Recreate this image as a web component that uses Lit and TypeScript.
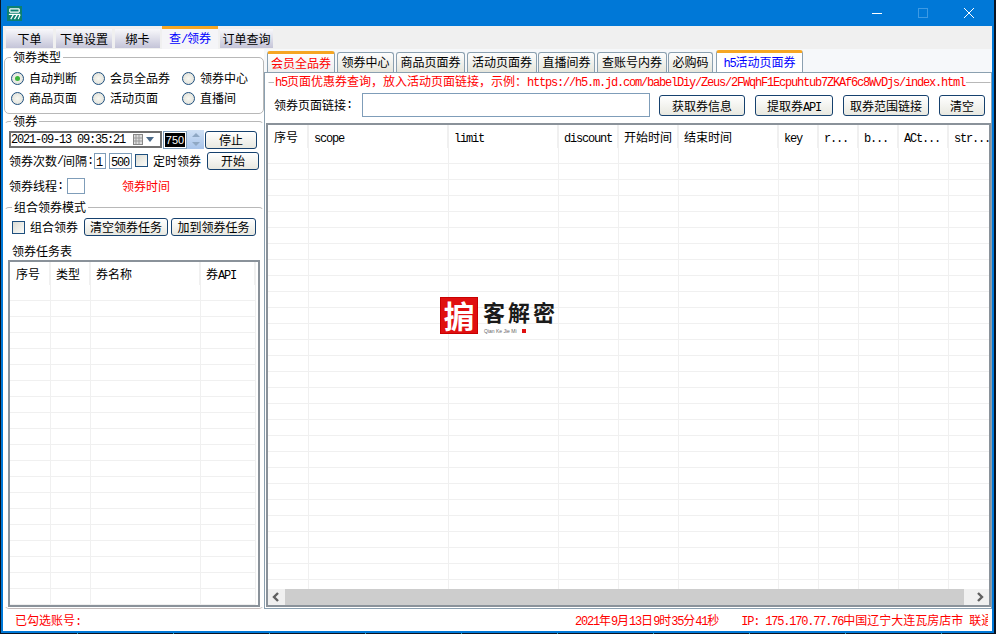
import { LitElement, html, css } from "lit";
import { customElement } from "lit/decorators.js";

const leftCols = [{ t: "序号", w: 41 }, { t: "类型", w: 40 }, { t: "券名称", w: 110 }, { t: "券API", w: 55 }];
const rightCols = [
  { t: "序号", w: 41 }, { t: "scope", w: 140 }, { t: "limit", w: 110 }, { t: "discount", w: 60 },
  { t: "开始时间", w: 60 }, { t: "结束时间", w: 100 }, { t: "key", w: 40 }, { t: "r...", w: 40 },
  { t: "b...", w: 40 }, { t: "ACt...", w: 50 }, { t: "str...", w: 42 },
];
const menuTabs = [
  { t: "下单", w: 47, gap: 3 }, { t: "下单设置", w: 56, gap: 3 }, { t: "绑卡", w: 45, gap: 2 },
  { t: "查/领券", w: 56, gap: 2, on: true }, { t: "订单查询", w: 53, gap: 0 },
];
const couponTabs = [
  { t: "会员全品券", w: 68, gap: 2, cls: "sel" }, { t: "领券中心", w: 57, gap: 2, cls: "" },
  { t: "商品页面券", w: 69, gap: 2, cls: "" }, { t: "活动页面券", w: 70, gap: 1, cls: "" },
  { t: "直播间券", w: 57, gap: 2, cls: "" }, { t: "查账号内券", w: 70, gap: 1, cls: "" },
  { t: "必购码", w: 45, gap: 3, cls: "" }, { t: "h5活动页面券", w: 87, gap: 0, cls: "on" },
];
const radios = [
  { t: "自动判断", on: true }, { t: "会员全品券" }, { t: "领券中心" },
  { t: "商品页面" }, { t: "活动页面" }, { t: "直播间" },
];

// latin runs are squeezed so they take half of a CJK cell, like the bitmap font
const mix = (s: string) =>
  s.split(/([\x20-\x7e]+)/).map((p, i) => (i % 2 ? html`<span class="m">${p}</span>` : p));

const latin = css`
  .m { font-family: "Liberation Mono", monospace; font-size: 12px; letter-spacing: -1.2px; white-space: pre; }
`;

@customElement("data-grid")
class DataGrid extends LitElement {
  static properties = { cols: { type: Array }, rows: { type: Number } };
  cols: { t: string; w: number }[] = [];
  rows = 0;

  static styles = [
    latin,
    css`
      :host { display: block; overflow: hidden; height: 100%; font-size: 12px; color: #000; }
      .row { display: flex; height: 16px; }
      .head { height: 23px; }
      .cell { box-sizing: border-box; flex: none; border-right: 1px solid #f0f0f0; border-bottom: 1px solid #f0f0f0; }
      .head .cell { border-bottom: none; border-right-width: 2px; padding: 5px 0 0 5px; line-height: 14px; white-space: nowrap; overflow: hidden; }
      .head .cell:first-child { padding-left: 6px; }
    `,
  ];

  render() {
    return html`
      <div class="row head">
        ${this.cols.map((c) => html`<div class="cell" style="width:${c.w}px">${mix(c.t)}</div>`)}
      </div>
      ${Array.from({ length: this.rows }).map(
        () => html`<div class="row">${this.cols.map((c) => html`<div class="cell" style="width:${c.w}px"></div>`)}</div>`
      )}
    `;
  }
}

@customElement("app-root")
export class AppRoot extends LitElement {
  static styles = [
    latin,
    css`
      :host {
        display: block; width: 996px; height: 634px; overflow: hidden;
        background: linear-gradient(90deg, #2aa7c0 1px, transparent 1px) 77px 0 / 96px 100% #0b1320;
        font-family: "Noto Sans CJK SC", sans-serif; font-size: 12px; line-height: 14px; color: #000;
      }
      .window { box-sizing: border-box; width: 993px; height: 633px; margin-left: 1px; border: 2px solid #0078d7; border-top: none; display: flex; flex-direction: column; background: #fff; }
      .title { height: 26px; flex: none; background: #0078d7; display: flex; align-items: center; padding-left: 4px; }
      .title .logo { width: 15px; height: 15px; }
      .caption { margin-left: auto; display: flex; }
      .caption button { all: unset; width: 46px; height: 26px; display: flex; align-items: center; justify-content: center; }
      .menu { height: 23px; flex: none; background: #f0f0f0; display: flex; padding-left: 3px; }
      .mtab { box-sizing: border-box; height: 19px; margin-top: 3px; line-height: 19px; text-align: center; background: linear-gradient(#f8f8fb, #c4c4d8); }
      .mtab.on { height: 23px; margin-top: 0; background: #f5f5f8; color: #00f; border-top: 3px solid #f5a623; line-height: 18px; }
      .body { flex: 1; display: flex; background: #f6f8fa; min-height: 0; }
      .left { width: 261px; flex: none; padding-left: 1px; box-sizing: border-box; background: #fff; display: flex; flex-direction: column; }
      fieldset { margin: 0; padding: 0; border: 1px solid #b8b8b8; border-radius: 5px; min-width: 0; }
      legend { padding: 0 2px; margin-left: 7px; line-height: 14px; white-space: nowrap; }
      .types { height: 64px; flex: none; box-sizing: border-box; margin-top: 1px; padding: 4px 0 0 6px; display: grid; grid-template-columns: 81px 90px 80px; grid-auto-rows: 20px; }
      .types legend { margin-left: 0; }
      .opt { display: flex; align-items: center; gap: 5px; height: 20px; }
      .radio { box-sizing: border-box; width: 13px; height: 13px; border-radius: 50%; border: 1px solid #1e4f7e; background: radial-gradient(#f8f8f2, #dcdcd4); flex: none; display: flex; align-items: center; justify-content: center; }
      .radio.on::after { content: ""; width: 5px; height: 5px; border-radius: 50%; background: #3cb43c; }
      .check { box-sizing: border-box; width: 13px; height: 13px; border: 1px solid #1e4f7e; background: linear-gradient(135deg, #dcdcd4, #fbfbf8); flex: none; }
      .coupon { height: 86px; flex: none; box-sizing: border-box; padding: 2px 0 0 4px; border-color: #b8b8b8 transparent transparent; display: flex; flex-direction: column; }
      .coupon legend { margin-left: 2px; }
      .line { display: flex; align-items: center; height: 19px; white-space: nowrap; }
      .l2 { margin-top: 2px; }
      .l3 { margin-top: 6px; }
      .date { box-sizing: border-box; width: 153px; height: 17px; border: 2px solid #707070; background: #fff; display: flex; align-items: center; }
      .date svg { margin-left: auto; margin-right: 5px; }
      .spin { box-sizing: border-box; width: 24px; height: 18px; margin-left: 1px; background: #fff; border: 1px solid #7f9db9; padding: 1px; }
      .spin span { display: block; height: 14px; background: #000; color: #fff; text-align: center; line-height: 14px; font-family: "Liberation Sans", sans-serif; font-size: 11px; }
      .arrows { width: 17px; height: 19px; background: linear-gradient(#cfe0f5, #a8c4ea); display: flex; align-items: center; justify-content: center; }
      .btn { box-sizing: border-box; height: 18px; border: 1px solid #16416e; border-radius: 3px; background: linear-gradient(#fff, #e8e8e0); text-align: center; line-height: 16px; flex: none; }
      .btn.tall { height: 21px; line-height: 19px; }
      .w52 { width: 52px; }
      .inp { box-sizing: border-box; height: 16px; border: 1px solid #7f9db9; background: #fff; line-height: 14px; padding-left: 1px; flex: none; }
      .red { color: #f00; }
      .combo { flex: 1; min-height: 0; box-sizing: border-box; border-color: #b8b8b8 transparent #c4bcbc; padding-top: 4px; display: flex; flex-direction: column; }
      .combo-row { display: flex; align-items: center; padding-left: 7px; height: 18px; }
      .sub { padding: 8px 0 0 7px; height: 24px; box-sizing: border-box; }
      .grid-box { flex: 1; min-height: 0; margin: 0 3px 1px 3px; border: 2px solid #8a929a; background: #fff; overflow: hidden; }
      .right { flex: 1; min-width: 0; display: flex; flex-direction: column; padding-top: 1px; }
      .rtabs { display: flex; height: 22px; padding-left: 3px; align-items: flex-end; flex: none; }
      .rtab { box-sizing: border-box; height: 20px; line-height: 18px; text-align: center; border: 1px solid #8ba0b0; border-bottom: none; border-radius: 3px 3px 0 0; background: linear-gradient(#fdfdfd, #e6e6dc); }
      .rtab.sel { height: 21px; color: #f00; border-top: 3px solid #f5a623; line-height: 17px; background: linear-gradient(#fff, #eee); }
      .rtab.on { height: 22px; background: #fff; color: #00f; border-top: 3px solid #f5a623; line-height: 17px; }
      .pane { flex: 1; min-height: 0; background: #fff; border: 1px solid #8ba0b0; display: flex; flex-direction: column; }
      .query { height: 49px; flex: none; box-sizing: border-box; margin: 1px 0 0 3px; border-color: #b8b8b8 transparent transparent; border-radius: 0; padding-left: 5px; }
      .query legend { margin-left: 0; color: #f00; padding: 0 1px; }
      .query .line { height: 24px; margin-top: 3px; }
      .url { width: 288px; height: 24px; margin-left: 10px; }
      .rgrid { flex: 1; min-height: 0; border: 2px solid #8a929a; margin: 0 0 1px 1px; background: #fff; display: flex; flex-direction: column; position: relative; }
      .rgrid data-grid { flex: 1; min-height: 0; }
      .hbar { height: 16px; flex: none; background: #f0f0f0; display: flex; }
      .thumb { flex: 1; background: #cdcdcd; }
      .stamp { position: absolute; left: 172px; top: 172px; display: flex; align-items: flex-start; }
      .seal { box-sizing: border-box; width: 38px; height: 37px; background: #e01010; color: #fff; font-weight: 700; font-size: 31px; line-height: 34px; text-align: center; border: 1px solid #c80000; }
      .brand { font-weight: 700; font-size: 22px; line-height: 24px; letter-spacing: 3px; margin: 2px 0 0 5px; color: #1a1a1a; }
      .sub-brand { font-family: "Liberation Sans", sans-serif; font-size: 5px; line-height: 6px; color: #666; display: flex; align-items: center; gap: 5px; margin: 5px 0 0 6px; }
      .sub-brand i { width: 4px; height: 4px; background: #e01010; display: block; }
      .status { box-sizing: border-box; height: 22px; flex: none; margin-right: 4px; padding: 2px 0 0 12px; display: flex; align-items: center; color: #f00; white-space: nowrap; overflow: hidden; }
      .status .t { margin-left: 494px; }
      .status .ip { margin-left: 22px; }
    `,
  ];

  render() {
    return html`
      <div class="window">
        <div class="title">
          <svg class="logo" viewBox="0 0 16 16">
            <rect width="16" height="16" fill="#0d8070" />
            <path d="M3 3h10M3 6.5h10M3 3v3.5M13 3v3.5M2 9h12M4 14l3-5M8 14l3-5M12 14l2-5" stroke="#fff" stroke-width="1.3" fill="none" />
          </svg>
          <div class="caption">
            <button><svg width="10" height="10"><path d="M0 5.5h10" stroke="#fff" /></svg></button>
            <button><svg width="10" height="10"><rect x=".5" y=".5" width="9" height="9" fill="none" stroke="#3d9ae4" /></svg></button>
            <button><svg width="10" height="10"><path d="M0 0l10 10M10 0L0 10" stroke="#fff" /></svg></button>
          </div>
        </div>
        <div class="menu">
          ${menuTabs.map(
            (m) => html`<div class="mtab ${m.on ? "on" : ""}" style="width:${m.w}px;margin-right:${m.gap}px">${mix(m.t)}</div>`
          )}
        </div>
        <div class="body">
          <div class="left">
            <fieldset class="types">
              <legend>领券类型</legend>
              ${radios.map((r) => html`<div class="opt"><span class="radio ${r.on ? "on" : ""}"></span>${r.t}</div>`)}
            </fieldset>
            <fieldset class="coupon">
              <legend>领券</legend>
              <div class="line">
                <div class="date"><span class="m">2021-09-13 09:35:21</span>
                  <svg width="22" height="11" viewBox="0 0 22 11"><rect x=".5" y=".5" width="9" height="10" fill="#ddd" stroke="#888" /><path d="M3 1v9M6 1v9M1 4h8M1 7h8" stroke="#999" /><path d="M13 3h8l-4 5z" fill="#4a6a8a" /></svg>
                </div>
                <div class="spin"><span>750</span></div>
                <div class="arrows"><svg width="10" height="17"><path d="M5 2l4 4H1zM5 15l4-4H1z" fill="#8fa8c4" /></svg></div>
                <div class="btn w52" style="margin-left:1px">停止</div>
              </div>
              <div class="line l2">
                ${mix("领券次数/间隔:")}
                <div class="inp" style="width:12px;margin-left:1px"><span class="m">1</span></div>
                <div class="inp" style="width:23px;margin-left:3px"><span class="m">500</span></div>
                <span class="check" style="margin:0 5px 0 3px"></span>定时领券
                <div class="btn w52" style="margin-left:6px">开始</div>
              </div>
              <div class="line l3">
                ${mix("领券线程:")}
                <div class="inp" style="width:18px;margin-left:4px"></div>
                <span class="red" style="margin-left:37px">领券时间</span>
              </div>
            </fieldset>
            <fieldset class="combo">
              <legend>组合领券模式</legend>
              <div class="combo-row">
                <span class="check" style="margin-right:5px"></span>组合领券
                <div class="btn" style="width:84px;margin-left:6px">清空领券任务</div>
                <div class="btn" style="width:85px;margin-left:3px">加到领券任务</div>
              </div>
              <div class="sub">领券任务表</div>
              <div class="grid-box"><data-grid .cols=${leftCols} .rows=${20}></data-grid></div>
            </fieldset>
          </div>
          <div class="right">
            <div class="rtabs">
              ${couponTabs.map(
                (c) => html`<div class="rtab ${c.cls}" style="width:${c.w}px;margin-right:${c.gap}px">${mix(c.t)}</div>`
              )}
            </div>
            <div class="pane">
              <fieldset class="query">
                <legend>${mix("h5页面优惠券查询，放入活动页面链接，示例：https://h5.m.jd.com/babelDiy/Zeus/2FWqhF1Ecpuhtub7ZKAf6c8WvDjs/index.html")}</legend>
                <div class="line">
                  ${mix("领券页面链接:")}
                  <div class="inp url"></div>
                  <div class="btn tall" style="width:86px;margin-left:9px">获取券信息</div>
                  <div class="btn tall" style="width:78px;margin-left:10px">${mix("提取券API")}</div>
                  <div class="btn tall" style="width:86px;margin-left:10px">取券范围链接</div>
                  <div class="btn tall" style="width:46px;margin-left:10px">清空</div>
                </div>
              </fieldset>
              <div class="rgrid">
                <data-grid .cols=${rightCols} .rows=${28}></data-grid>
                <div class="hbar">
                  <svg width="17" height="16"><path d="M10 4l-4 4 4 4" fill="none" stroke="#606060" stroke-width="2.4" /></svg>
                  <div class="thumb"></div>
                  <svg width="25" height="16"><path d="M14 4l4 4-4 4" fill="none" stroke="#606060" stroke-width="2.4" /></svg>
                </div>
                <div class="stamp">
                  <div class="seal">掮</div>
                  <div>
                    <div class="brand">客解密</div>
                    <div class="sub-brand">Qian Ke Jie Mi <i></i></div>
                  </div>
                </div>
              </div>
            </div>
          </div>
        </div>
        <div class="status">
          <span>${mix("已勾选账号:")}</span>
          <span class="t">${mix("2021年9月13日9时35分41秒")}</span>
          <span class="ip">${mix("IP: 175.170.77.76中国辽宁大连瓦房店市 联通")}</span>
        </div>
      </div>
    `;
  }
}
void DataGrid;
